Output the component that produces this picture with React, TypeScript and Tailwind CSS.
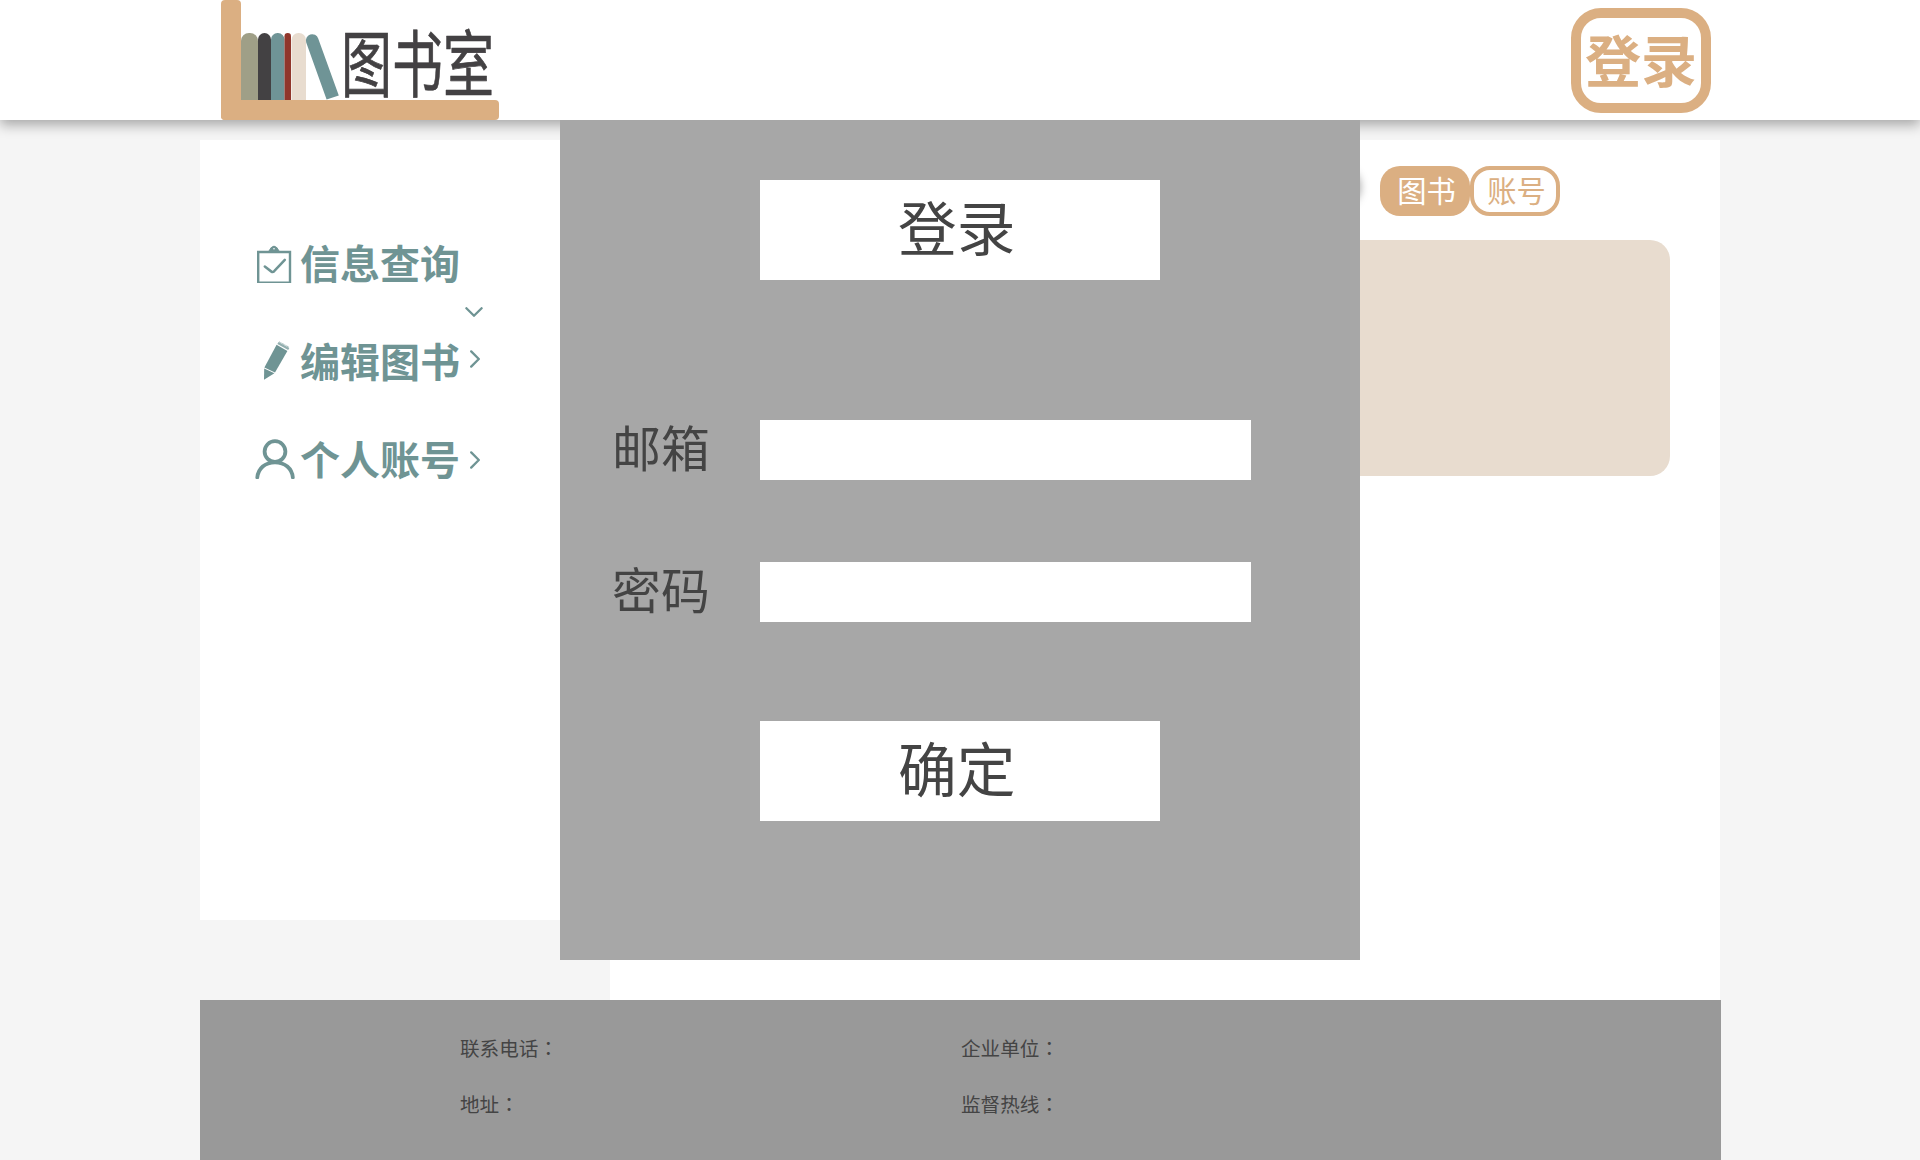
import type { ReactNode } from "react";

function Logo() {
  return (
    <svg className="block h-[120px] w-[279px]" viewBox="0 0 279 120">
      <rect x="20" y="33" width="17" height="80" rx="8" fill="#9f9f87" />
      <rect x="37" y="33" width="13" height="80" rx="6.5" fill="#434143" />
      <rect x="50" y="33" width="13.5" height="80" rx="6.5" fill="#6f9496" />
      <rect x="63.5" y="33" width="6.5" height="80" rx="3.2" fill="#90362b" />
      <rect x="70.5" y="33" width="14.5" height="80" rx="7" fill="#e8dccf" />
      <path d="M85.2 42.5A6.3 6.3 0 0 1 97.2 38.5L117.8 95.5L105.6 99.6Z" fill="#6f9496" />
      <rect x="0" y="0" width="20" height="120" rx="4" fill="#dbaf82" />
      <rect x="0" y="100" width="278" height="20" rx="4" fill="#dbaf82" />
      <text
        transform="translate(120 91) scale(1 1.42)"
        fontSize="51"
        fontWeight="400"
        fill="#434143"
        stroke="#434143"
        strokeWidth="0.5"
        strokeLinejoin="round"
        className="font-['Noto_Sans_CJK_SC',sans-serif]"
      >
        图书室
      </text>
    </svg>
  );
}

function ClipboardIcon() {
  return (
    <svg className="h-10 w-[45px]" viewBox="25 23 45 40" fill="none" stroke="#6f9494" strokeWidth="2.4">
      <path d="M28.2 32H60V62.8H28.2Z" />
      <path d="M38.5 31.7L41.2 27.6Q44 24.6 46.8 27.6L49.5 31.7Z" fill="#6f9494" strokeWidth="1" />
      <circle cx="44" cy="28.8" r="0.8" fill="#fff" stroke="none" />
      <path d="M34.8 46.6L41.4 51.6Q42.8 52.4 44.2 51.2L54.8 39.8" strokeLinecap="round" strokeWidth="2.5" />
    </svg>
  );
}

function PencilIcon() {
  return (
    <svg className="h-10 w-[45px]" viewBox="25 121 45 40">
      <path d="M46.6 124.8L57.4 131L45 152.4L34.4 147.4Z" fill="#6f9494" />
      <path d="M34.2 148.4L44.4 153.3L34 159.8Z" fill="#6f9494" />
      <path d="M47.4 124L58.2 130L59.3 128L48.5 122Z" fill="#6f9494" fillOpacity="0.75" />
      <path d="M49.2 121.8L59 127.2" stroke="#6f9494" strokeWidth="0.7" strokeDasharray="1 0.5" />
    </svg>
  );
}

function UserIcon() {
  return (
    <svg
      className="h-10 w-[45px]"
      viewBox="25 219 45 40"
      fill="none"
      stroke="#6f9494"
      strokeWidth="3.8"
      strokeLinecap="round"
    >
      <circle cx="45" cy="231.6" r="10.4" />
      <path d="M27.3 257.4C28.2 248.5 35 242.3 45 242.3S62 248.5 62.8 257.4" />
    </svg>
  );
}

function Chevron({ className }: { className: string }) {
  return (
    <svg
      className={className}
      viewBox="0 0 10 18"
      fill="none"
      stroke="#6f9494"
      strokeWidth="2.3"
      strokeLinecap="round"
      strokeLinejoin="round"
    >
      <path d="M1.2 1.4L8.8 9L1.2 16.6" />
    </svg>
  );
}

function MenuItem({ icon, label, chevron }: { icon: ReactNode; label: string; chevron: ReactNode }) {
  return (
    <li className="flex h-10">
      {icon}
      <span className="w-[170px] text-[40px] leading-[38px] font-bold whitespace-nowrap">{label}</span>
      {chevron}
    </li>
  );
}

function Field({ label, type }: { label: string; type: string }) {
  return (
    <label className="flex h-[60px] items-start">
      <span className="w-[148px] text-[48.9px] leading-[52px]">{label}</span>
      <input type={type} className="h-[60px] w-[491px] bg-white px-3 text-2xl outline-none" />
    </label>
  );
}

function LoginDialog() {
  return (
    <div className="absolute top-[120px] left-[560px] z-20 flex h-[840px] w-[800px] flex-col bg-[#a7a7a7] pt-[60px] text-[#444]">
      <h2 className="ml-[200px] h-[100px] w-[400px] bg-white pl-[138px] text-[58.7px] leading-[92px]">登录</h2>
      <div className="mt-[140px] ml-[52px] flex flex-col gap-[82px]">
        <Field label="邮箱" type="email" />
        <Field label="密码" type="password" />
      </div>
      <button className="mt-[99px] flex ml-[200px] h-[100px] w-[400px] items-start bg-white pl-[138px] text-left text-[58.7px] leading-[92px]">
        确定
      </button>
    </div>
  );
}

function ContactLine({ label }: { label: string }) {
  return (
    <span lang="zh-CN">
      {label}
      <span lang="zh-TW" className="font-['Noto_Sans_CJK_TC',sans-serif]">
        ：
      </span>
    </span>
  );
}

export default function App() {
  return (
    <div className="relative h-[1160px] w-[1920px] overflow-hidden bg-[#f5f5f5] font-['Noto_Sans_CJK_SC',sans-serif]">
      <header className="relative z-10 flex h-[120px] items-start justify-between bg-white pr-[209px] pl-[221px] shadow-[0_5px_12px_rgba(0,0,0,0.32)]">
        <Logo />
        <button className="mt-2 flex h-[105px] w-[140px] items-center justify-center rounded-[30px] border-10 border-[#dbaf82] pb-[5px] text-[56px] leading-none font-bold whitespace-nowrap text-[#dbaf82]">
          登录
        </button>
      </header>

      <div className="relative mt-5 ml-[200px] flex h-[860px] w-[1520px] items-start justify-between">
        <aside className="h-[780px] w-[390px] bg-white pt-[103px] pl-[55px] text-[#6f9494]">
          <ul className="flex flex-col gap-[58px]">
            <MenuItem
              icon={<ClipboardIcon />}
              label="信息查询"
              chevron={<Chevron className="-ml-px mt-[60px] h-[18px] w-[10px] rotate-90" />}
            />
            <MenuItem
              icon={<PencilIcon />}
              label="编辑图书"
              chevron={<Chevron className="mt-[9px] h-[18px] w-[10px]" />}
            />
            <MenuItem
              icon={<UserIcon />}
              label="个人账号"
              chevron={<Chevron className="mt-[12px] h-[18px] w-[10px]" />}
            />
          </ul>
        </aside>
        <main className="h-[860px] w-[1110px] bg-white px-[50px] pt-[26px]">
          <div className="flex h-[50px] text-[29.3px]">
            <div className="mr-5 h-[36px] w-[700px] rounded-full bg-white shadow-[0_3px_10px_rgba(0,0,0,0.4)]" />
            <button className="flex h-[50px] w-[90px] justify-center rounded-[20px] bg-[#dbaf82] pl-[3px] leading-[47px] text-white">
              图书
            </button>
            <button className="flex h-[50px] w-[90px] justify-center rounded-[20px] border-4 border-[#dbaf82] pl-[3px] leading-[39px] text-[#dbaf82]">
              账号
            </button>
          </div>
          <section className="mt-6 h-[236px] w-[1010px] rounded-[20px] bg-[#e8dccf]" />
        </main>
      </div>

      <footer className="ml-[200px] grid h-40 w-[1521px] grid-cols-[501px_1fr] content-start gap-y-[26px] bg-[#999] pt-[33px] pl-[260px] text-[19.6px] leading-[30px] text-[#444]">
        <ContactLine label="联系电话" />
        <ContactLine label="企业单位" />
        <ContactLine label="地址" />
        <ContactLine label="监督热线" />
      </footer>

      <LoginDialog />
    </div>
  );
}
